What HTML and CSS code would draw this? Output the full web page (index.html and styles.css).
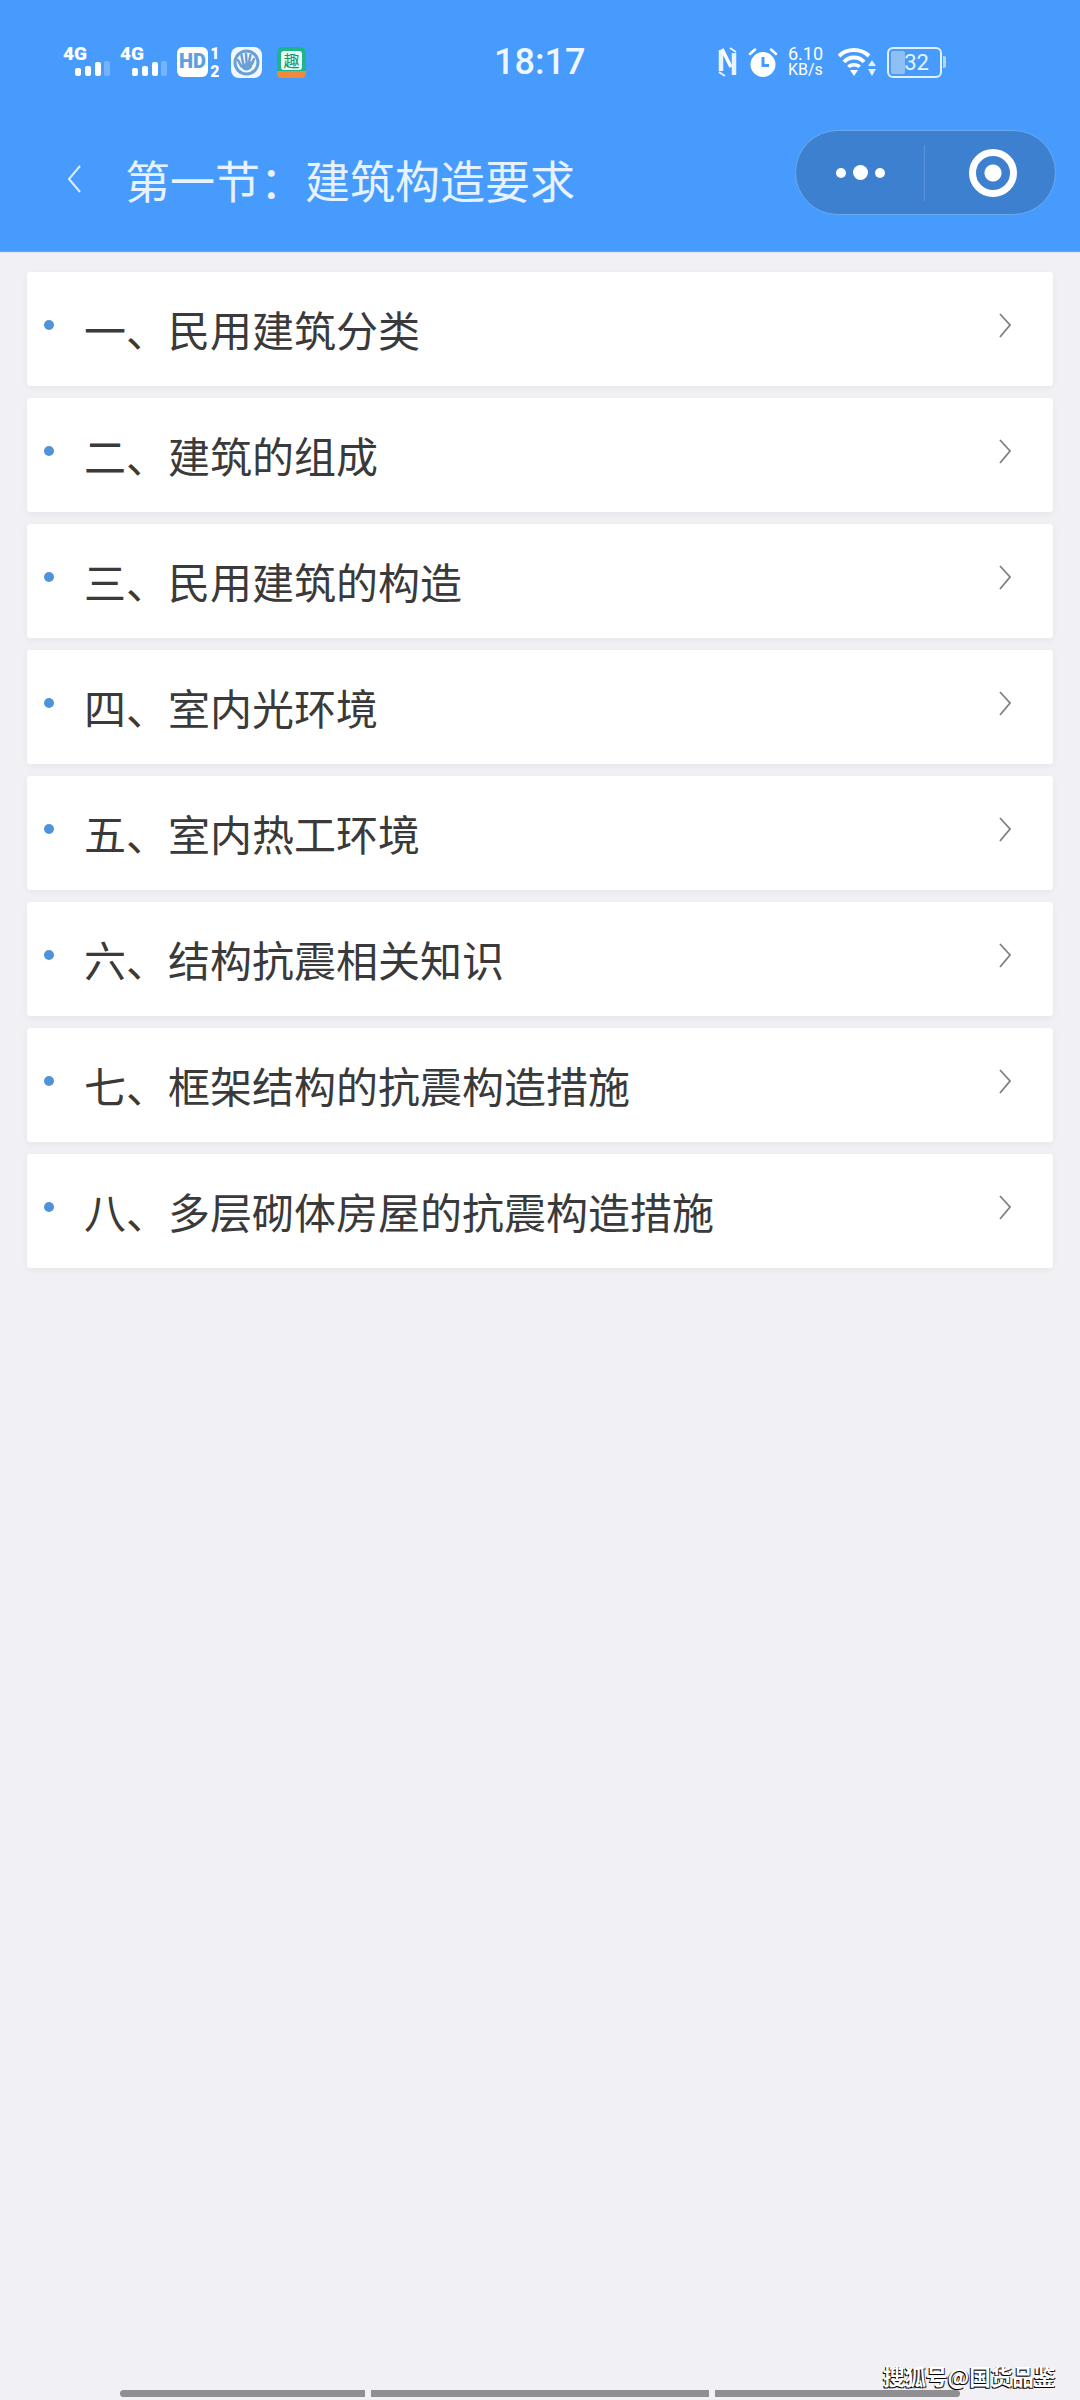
FILE: index.html
```html
<!DOCTYPE html>
<html lang="zh-CN">
<head>
    <meta charset="UTF-8">
    <meta name="viewport" content="width=device-width, initial-scale=1.0">
    <title>第一节&#xFF1A;建筑构造要求</title>
    <link rel="stylesheet" href="styles.css">
</head>
<body>
    <div class="page">
        <header class="header">
            <div class="status-bar">
                <div class="status-left">
                    <svg class="signal" width="47" height="44" viewBox="0 -6 47 44">
                        <text x="0" y="14" class="net-text">4G</text>
                        <rect x="12" y="22" width="6" height="8" rx="2" fill="#fff"/>
                        <rect x="22" y="20" width="6" height="10" rx="2" fill="#fff"/>
                        <rect x="32" y="16" width="6" height="14" rx="2" fill="#fff"/>
                        <rect x="41" y="15" width="6" height="15" rx="2" fill="#fff" opacity="0.25"/>
                    </svg>
                    <svg class="signal" width="47" height="44" viewBox="0 -6 47 44">
                        <text x="0" y="14" class="net-text">4G</text>
                        <rect x="12" y="22" width="6" height="8" rx="2" fill="#fff"/>
                        <rect x="22" y="20" width="6" height="10" rx="2" fill="#fff"/>
                        <rect x="32" y="16" width="6" height="14" rx="2" fill="#fff"/>
                        <rect x="41" y="15" width="6" height="15" rx="2" fill="#fff" opacity="0.25"/>
                    </svg>
                    <svg class="hd" width="42" height="44" viewBox="0 -7 42 44">
                        <rect x="0" y="0" width="31" height="30" rx="6" fill="#fff"/>
                        <text x="15.500" y="21" class="hd-text">HD</text>
                        <text x="38" y="12" class="hd-num">1</text>
                        <text x="38" y="30" class="hd-num">2</text>
                    </svg>
                    <svg class="hand" width="31" height="31" viewBox="0 0 31 31">
                        <rect x="0" y="0" width="31" height="31" rx="8" fill="#f2f8ff"/>
                        <circle cx="15.500" cy="15.500" r="11.500" fill="none" stroke="#6b9fd8" stroke-width="3"/>
                        <path d="M10 19 L7 13 M12 16 L10.500 8 M15.500 15 L15 7 M18 15 L19.500 8 M21 17 L23 12" fill="none" stroke="#6b9fd8" stroke-width="2.500" stroke-linecap="round"/>
                        <path d="M9 18 L21 14 L21 20 C18 25 12 25 9 18 Z" fill="#6b9fd8"/>
                    </svg>
                    <svg class="app" width="29" height="31" viewBox="0 0 29 31">
                        <rect x="0" y="0" width="29" height="31" rx="6" fill="#1fb58a"/>
                        <rect x="4" y="4" width="21" height="19" rx="3" fill="#e6fbf3"/>
                        <text x="14.500" y="20" class="app-text">趣</text>
                        <path d="M0 24 H29 V26 C29 29 27 31 24 31 H5 C2 31 0 29 0 26 Z" fill="#ee8a3c"/>
                    </svg>
                </div>
                <div class="time">18:17</div>
                <div class="status-right">
                    <svg class="nfc" width="19" height="30" viewBox="0 0 19 30">
                        <path d="M3 3 V24" fill="none" stroke="#e8f3ff" stroke-width="4.500"/>
                        <path d="M1 25 L7 29" fill="none" stroke="#e8f3ff" stroke-width="2"/>
                        <path d="M4 2 L13 20" fill="none" stroke="#fff" stroke-width="3.500"/>
                        <path d="M16 6 V28" fill="none" stroke="#e8f3ff" stroke-width="4.500"/>
                        <path d="M12 1 L18 5" fill="none" stroke="#e8f3ff" stroke-width="2"/>
                    </svg>
                    <svg class="alarm" width="30" height="31" viewBox="0 0 30 31">
                        <circle cx="15" cy="17.500" r="12.500" fill="#fff"/>
                        <path d="M2 7 L7 2.500 M28 7 L23 2.500" stroke="#fff" stroke-width="2.500" stroke-linecap="round"/>
                        <path d="M15 10 V18.500 H21" fill="none" stroke="#469bfd" stroke-width="3"/>
                    </svg>
                    <div class="speed">
                        <span class="speed-num">6.10</span>
                        <span class="speed-unit">KB/s</span>
                    </div>
                    <svg class="wifi" width="38" height="30" viewBox="0 0 38 30">
                        <path d="M1 9 C9 1 23 1 31 9" fill="none" stroke="#fff" stroke-width="4"/>
                        <path d="M6 15 C11 9 21 9 26 15" fill="none" stroke="#fff" stroke-width="4"/>
                        <path d="M10.500 20 C13 17 19 17 21.500 20" fill="none" stroke="#fff" stroke-width="3.500"/>
                        <path d="M12 23 H20 L16 29 Z" fill="#fff"/>
                        <path d="M34 13 L38 19 H30 Z M30 22 H38 L34 29 Z" fill="#e3f0ff"/>
                    </svg>
                    <div class="battery">
                        <div class="battery-body">
                            <div class="battery-level"></div>
                            <span class="battery-num">32</span>
                        </div>
                        <div class="battery-nub"></div>
                    </div>
                </div>
            </div>
            <div class="nav-bar">
                <svg class="back" width="14" height="30" viewBox="0 0 14 30">
                    <path d="M13 2 L2 15 L13 28" fill="none" stroke="#dcecff" stroke-width="2"/>
                </svg>
                <h1 class="title">第一节&#xFF1A;建筑构造要求</h1>
                <div class="capsule">
                    <div class="capsule-more">
                        <span class="dot-small"></span>
                        <span class="dot-big"></span>
                        <span class="dot-small"></span>
                    </div>
                    <div class="capsule-close">
                        <span class="target"></span>
                    </div>
                </div>
            </div>
        </header>

        <ul class="list">
            <li class="item"><span class="bullet"></span><span class="item-text">一、民用建筑分类</span><svg class="arrow" width="12" height="25" viewBox="0 0 12 25"><path d="M1 1 L11 12 L1 24" fill="none" stroke="#808080" stroke-width="1.800"/></svg></li>
            <li class="item"><span class="bullet"></span><span class="item-text">二、建筑的组成</span><svg class="arrow" width="12" height="25" viewBox="0 0 12 25"><path d="M1 1 L11 12 L1 24" fill="none" stroke="#808080" stroke-width="1.800"/></svg></li>
            <li class="item"><span class="bullet"></span><span class="item-text">三、民用建筑的构造</span><svg class="arrow" width="12" height="25" viewBox="0 0 12 25"><path d="M1 1 L11 12 L1 24" fill="none" stroke="#808080" stroke-width="1.800"/></svg></li>
            <li class="item"><span class="bullet"></span><span class="item-text">四、室内光环境</span><svg class="arrow" width="12" height="25" viewBox="0 0 12 25"><path d="M1 1 L11 12 L1 24" fill="none" stroke="#808080" stroke-width="1.800"/></svg></li>
            <li class="item"><span class="bullet"></span><span class="item-text">五、室内热工环境</span><svg class="arrow" width="12" height="25" viewBox="0 0 12 25"><path d="M1 1 L11 12 L1 24" fill="none" stroke="#808080" stroke-width="1.800"/></svg></li>
            <li class="item"><span class="bullet"></span><span class="item-text">六、结构抗震相关知识</span><svg class="arrow" width="12" height="25" viewBox="0 0 12 25"><path d="M1 1 L11 12 L1 24" fill="none" stroke="#808080" stroke-width="1.800"/></svg></li>
            <li class="item"><span class="bullet"></span><span class="item-text">七、框架结构的抗震构造措施</span><svg class="arrow" width="12" height="25" viewBox="0 0 12 25"><path d="M1 1 L11 12 L1 24" fill="none" stroke="#808080" stroke-width="1.800"/></svg></li>
            <li class="item"><span class="bullet"></span><span class="item-text">八、多层砌体房屋的抗震构造措施</span><svg class="arrow" width="12" height="25" viewBox="0 0 12 25"><path d="M1 1 L11 12 L1 24" fill="none" stroke="#808080" stroke-width="1.800"/></svg></li>
        </ul>

        <div class="home-bars">
            <span class="home-bar bar-one"></span>
            <span class="home-bar bar-two"></span>
            <span class="home-bar bar-three"></span>
        </div>
        <div class="watermark">搜狐号@国货品鉴</div>
    </div>
</body>
</html>
```

FILE: styles.css
```css
* {
    box-sizing: border-box;
}
body {
    margin: 0;
    background-color: #f0f0f5;
    font-family: "Noto Sans CJK SC", "Noto Sans", sans-serif;
    color: #333;
}
.page {
    position: relative;
    display: flex;
    flex-direction: column;
    height: 2400px;
    overflow: hidden;
}

/* header */
.header {
    height: 251px;
    background-color: #469bfd;
    box-shadow: 0 1px 1px rgba(50, 110, 180, 0.6);
    color: #fff;
}
.status-bar {
    display: flex;
    align-items: center;
    height: 124px;
    padding-left: 63px;
}
.status-left {
    display: flex;
    align-items: center;
    width: 431px;
}
.signal {
    margin-right: 10px;
}
.net-text {
    font-family: "Roboto", sans-serif;
    font-size: 19px;
    font-weight: 900;
    fill: #fff;
}
.hd {
    margin-right: 12px;
}
.hd-text {
    font-family: "Roboto", sans-serif;
    font-size: 20px;
    font-weight: 900;
    fill: #5d9fe0;
    text-anchor: middle;
}
.hd-num {
    font-family: "Roboto", sans-serif;
    font-size: 16px;
    font-weight: 900;
    fill: #fff;
    text-anchor: middle;
}
.hand {
    margin-right: 15px;
}
.app-text {
    font-size: 16px;
    fill: #14946f;
    text-anchor: middle;
}
.time {
    width: 91px;
    font-family: "Roboto", sans-serif;
    font-size: 36px;
    font-weight: 500;
    line-height: 40px;
    text-align: center;
    color: #eef6ff;
}
.status-right {
    display: flex;
    align-items: center;
    margin-left: 133px;
}
.nfc {
    margin-right: 11px;
}
.alarm {
    margin-right: 10px;
}
.speed {
    display: flex;
    flex-direction: column;
    width: 40px;
    margin-right: 10px;
    font-family: "Roboto", sans-serif;
    line-height: 16px;
}
.speed-num {
    font-size: 18px;
}
.speed-unit {
    font-size: 16px;
}
.wifi {
    margin-right: 11px;
}
.battery {
    display: flex;
    align-items: center;
}
.battery-body {
    position: relative;
    display: flex;
    align-items: center;
    justify-content: center;
    width: 55px;
    height: 31px;
    padding-left: 4px;
    border: 2px solid #e3f0ff;
    border-radius: 6px;
    overflow: hidden;
}
.battery-level {
    position: absolute;
    left: 2px;
    top: 2px;
    bottom: 2px;
    width: 14px;
    background-color: #8fc0f5;
    border-radius: 2px;
}
.battery-num {
    position: relative;
    font-family: "Roboto", sans-serif;
    font-size: 22px;
    color: #e8f3ff;
}
.battery-nub {
    width: 3px;
    height: 12px;
    margin-left: 1px;
    background-color: #b5d6fa;
    border-radius: 0 2px 2px 0;
}
.nav-bar {
    display: flex;
    align-items: center;
    height: 110px;
    padding-left: 67px;
}
.back {
    margin-right: 44px;
}
.title {
    width: 670px;
    margin: 0;
    font-size: 45px;
    font-weight: 400;
    color: #e6f2ff;
}
.capsule {
    display: flex;
    align-items: center;
    align-self: flex-start;
    width: 261px;
    height: 85px;
    margin-top: 6px;
    background-color: #3d80cf;
    border: 1px solid #6aaaf0;
    border-radius: 43px;
}
.capsule-more {
    display: flex;
    align-items: center;
    justify-content: center;
    gap: 7px;
    width: 129px;
    height: 56px;
    border-right: 1px solid #5a97de;
}
.dot-small {
    width: 10px;
    height: 10px;
    border-radius: 50%;
    background-color: #fff;
}
.dot-big {
    width: 15px;
    height: 15px;
    border-radius: 50%;
    background-color: #fff;
}
.capsule-close {
    display: flex;
    justify-content: center;
    flex: 1;
    padding-left: 6px;
}
.target {
    display: block;
    width: 48px;
    height: 48px;
    border: 7px solid #fff;
    border-radius: 50%;
    background: radial-gradient(circle, #fff 0, #fff 8px, transparent 9px);
}

/* list */
.list {
    display: flex;
    flex-direction: column;
    gap: 12px;
    margin: 21px 27px 0;
    padding: 0;
    list-style: none;
}
.item {
    display: flex;
    align-items: center;
    height: 114px;
    padding: 0 42px 0 17px;
    background-color: #fff;
    border-radius: 3px;
    box-shadow: 0 2px 7px rgba(0, 0, 0, 0.05);
}
.bullet {
    flex: none;
    width: 10px;
    height: 10px;
    margin: -8px 30px 0 0;
    border-radius: 50%;
    background-color: #4f94d8;
}
.item-text {
    flex: 1;
    font-size: 42px;
    line-height: 60px;
    color: #3a3a3a;
}
.arrow {
    margin-top: -8px;
}

/* bottom */
.home-bars {
    display: flex;
    gap: 6px;
    margin-top: auto;
    margin-bottom: 3px;
    padding-left: 120px;
}
.home-bar {
    height: 7px;
    background-color: #8e8e93;
}
.bar-one {
    width: 245px;
    border-radius: 4px 0 0 4px;
}
.bar-two {
    width: 338px;
}
.bar-three {
    width: 245px;
    border-radius: 0 4px 4px 0;
}
.watermark {
    position: absolute;
    left: 883px;
    top: 2362px;
    font-size: 21.500px;
    font-weight: 700;
    line-height: 28px;
    white-space: nowrap;
    color: #fff;
    text-shadow: -1px 1px 0 #000, 1px 1px 0 #333;
}
```
